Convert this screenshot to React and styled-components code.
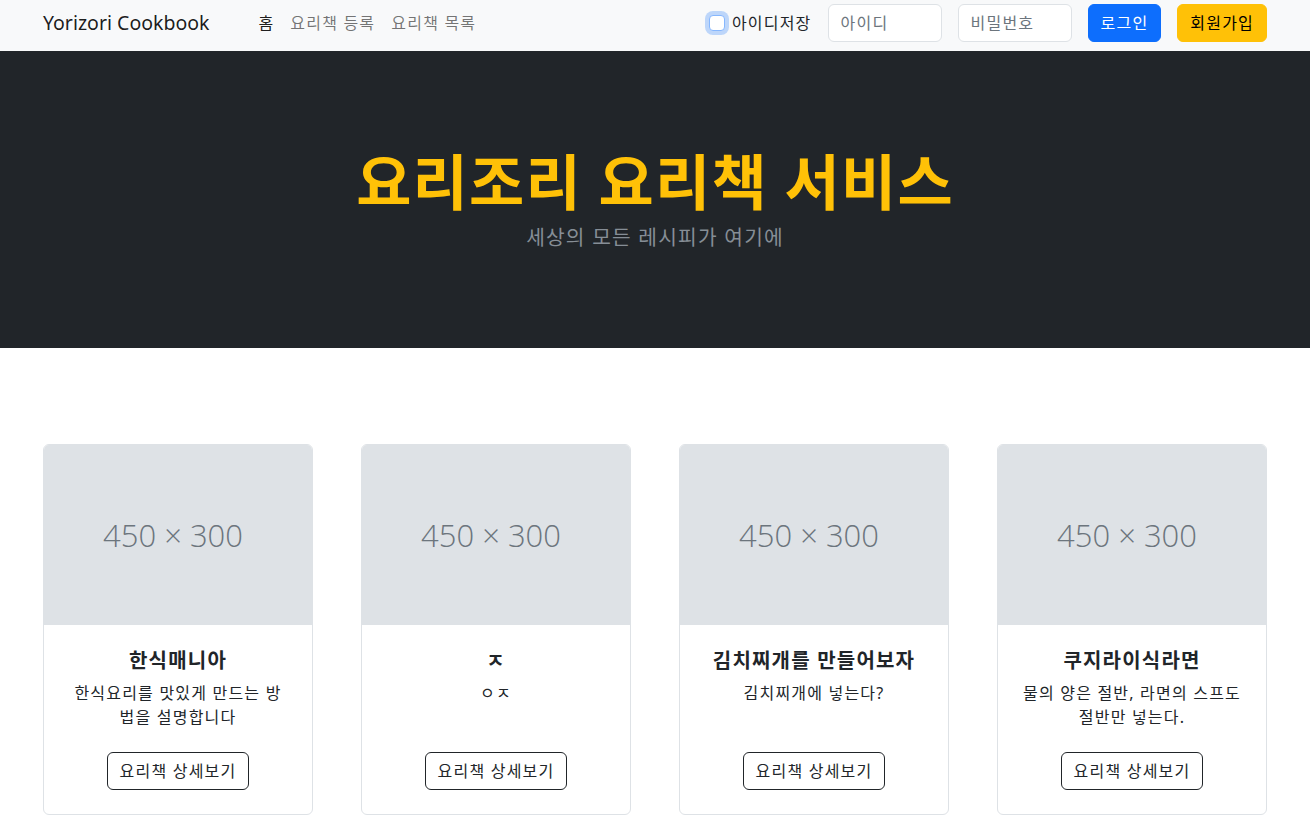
import styled, { createGlobalStyle } from "styled-components";

const GlobalStyle = createGlobalStyle`
  body {
    margin: 0;
    background: #fff;
    color: #212529;
    font-family: "Noto Sans", "Noto Sans CJK KR", sans-serif;
    font-size: 16px;
    line-height: 1.5;
    letter-spacing: 0.075em;
  }
  * { box-sizing: border-box; }
`;

const recipes = [
  { title: "한식매니아", text: "한식요리를 맛있게 만드는 방법을 설명합니다" },
  { title: "ㅈ", text: "ㅇㅈ" },
  { title: "김치찌개를 만들어보자", text: "김치찌개에 넣는다?" },
  { title: "쿠지라이식라면", text: "물의 양은 절반, 라면의 스프도 절반만 넣는다." },
];

const App = () => {
  return (
    <>
      <GlobalStyle />
      <Navbar>
        <Brand>Yorizori Cookbook</Brand>
        <NavList>
          <NavItem $active>홈</NavItem>
          <NavItem>요리책 등록</NavItem>
          <NavItem>요리책 목록</NavItem>
        </NavList>
        <LoginForm>
          <CheckLabel>
            <CheckBox type="checkbox" />
            아이디저장
          </CheckLabel>
          <Input type="text" placeholder="아이디" />
          <Input type="password" placeholder="비밀번호" />
          <Button $variant="primary">로그인</Button>
          <Button $variant="warning">회원가입</Button>
        </LoginForm>
      </Navbar>

      <Hero>
        <HeroTitle>요리조리 요리책 서비스</HeroTitle>
        <HeroLead>세상의 모든 레시피가 여기에</HeroLead>
      </Hero>

      <CardSection>
        {recipes.map((r, i) => (
          <Card key={i}>
            <Thumb>450 × 300</Thumb>
            <CardBody>
              <CardTitle>{r.title}</CardTitle>
              <CardText>{r.text}</CardText>
              <CardFooter>
                <OutlineButton>요리책 상세보기</OutlineButton>
              </CardFooter>
            </CardBody>
          </Card>
        ))}
      </CardSection>
    </>
  );
};

const Navbar = styled.nav`
  display: flex;
  align-items: center;
  height: 51px;
  padding: 0 43px 5px;
  background: #f8f9fa;
`;

const Brand = styled.a`
  font-size: 19.5px;
  line-height: 30px;
  letter-spacing: 0;
  color: rgba(0, 0, 0, 0.9);
  margin-right: 41px;
  cursor: pointer;
`;

const NavList = styled.div`
  display: flex;
`;

const NavItem = styled.a`
  padding: 0 8px;
  line-height: 24px;
  color: ${({ $active }) => ($active ? "rgba(0, 0, 0, 0.9)" : "rgba(0, 0, 0, 0.55)")};
  cursor: pointer;
`;

const LoginForm = styled.form`
  display: flex;
  align-items: center;
  gap: 16px;
  margin-left: auto;
`;

const CheckLabel = styled.label`
  display: flex;
  align-items: center;
  gap: 7px;
  color: #212529;
`;

const CheckBox = styled.input`
  appearance: none;
  width: 16px;
  height: 16px;
  margin: 0;
  border: 1px solid #86b7fe;
  border-radius: 4px;
  background: #fff;
  box-shadow: 0 0 0 4px rgba(13, 110, 253, 0.25);
`;

const Input = styled.input`
  width: 114px;
  height: 38px;
  padding: 6px 12px;
  font: inherit;
  letter-spacing: inherit;
  color: #212529;
  border: 1px solid #dee2e6;
  border-radius: 6px;
  background: #fff;

  &::placeholder {
    color: #6c757d;
  }
`;

const Button = styled.button`
  height: 38px;
  padding: 6px 12px;
  font: inherit;
  letter-spacing: inherit;
  border-radius: 6px;
  border: 1px solid ${({ $variant }) => ($variant === "primary" ? "#0d6efd" : "#ffc107")};
  background: ${({ $variant }) => ($variant === "primary" ? "#0d6efd" : "#ffc107")};
  color: ${({ $variant }) => ($variant === "primary" ? "#fff" : "#000")};
`;

const Hero = styled.header`
  height: 297px;
  background: #212529;
  display: flex;
  flex-direction: column;
  align-items: center;
  justify-content: center;
`;

const HeroTitle = styled.h1`
  margin: 0;
  font-size: 60px;
  line-height: 68px;
  font-weight: 700;
  color: #ffc107;
`;

const HeroLead = styled.p`
  margin: 6px 0 0;
  font-size: 20.3px;
  line-height: 30px;
  color: #868e96;
`;

const CardSection = styled.main`
  display: grid;
  grid-template-columns: repeat(4, 1fr);
  gap: 48px;
  padding: 96px 43px 48px;
`;

const Card = styled.div`
  display: flex;
  flex-direction: column;
  border: 1px solid #dee2e6;
  border-radius: 6px;
  overflow: hidden;
  background: #fff;
`;

const Thumb = styled.div`
  height: 180px;
  display: flex;
  align-items: center;
  justify-content: center;
  padding-right: 10px;
  background: #dee2e6;
  color: #6c757d;
  font-family: "Open Sans", sans-serif;
  font-weight: 300;
  font-size: 31px;
  letter-spacing: 0;
`;

const CardBody = styled.div`
  flex: 1;
  display: flex;
  flex-direction: column;
  align-items: center;
  padding: 24px;
  text-align: center;
`;

const CardTitle = styled.h5`
  margin: 0 0 8px;
  font-size: 20px;
  line-height: 24px;
  font-weight: 700;
`;

const CardText = styled.p`
  margin: 0 0 23px;
  line-height: 24px;
`;

const CardFooter = styled.div`
  margin-top: auto;
`;

const OutlineButton = styled.button`
  height: 38px;
  padding: 6px 12px;
  font: inherit;
  letter-spacing: inherit;
  color: #212529;
  background: transparent;
  border: 1px solid #212529;
  border-radius: 6px;
`;

export default App;
